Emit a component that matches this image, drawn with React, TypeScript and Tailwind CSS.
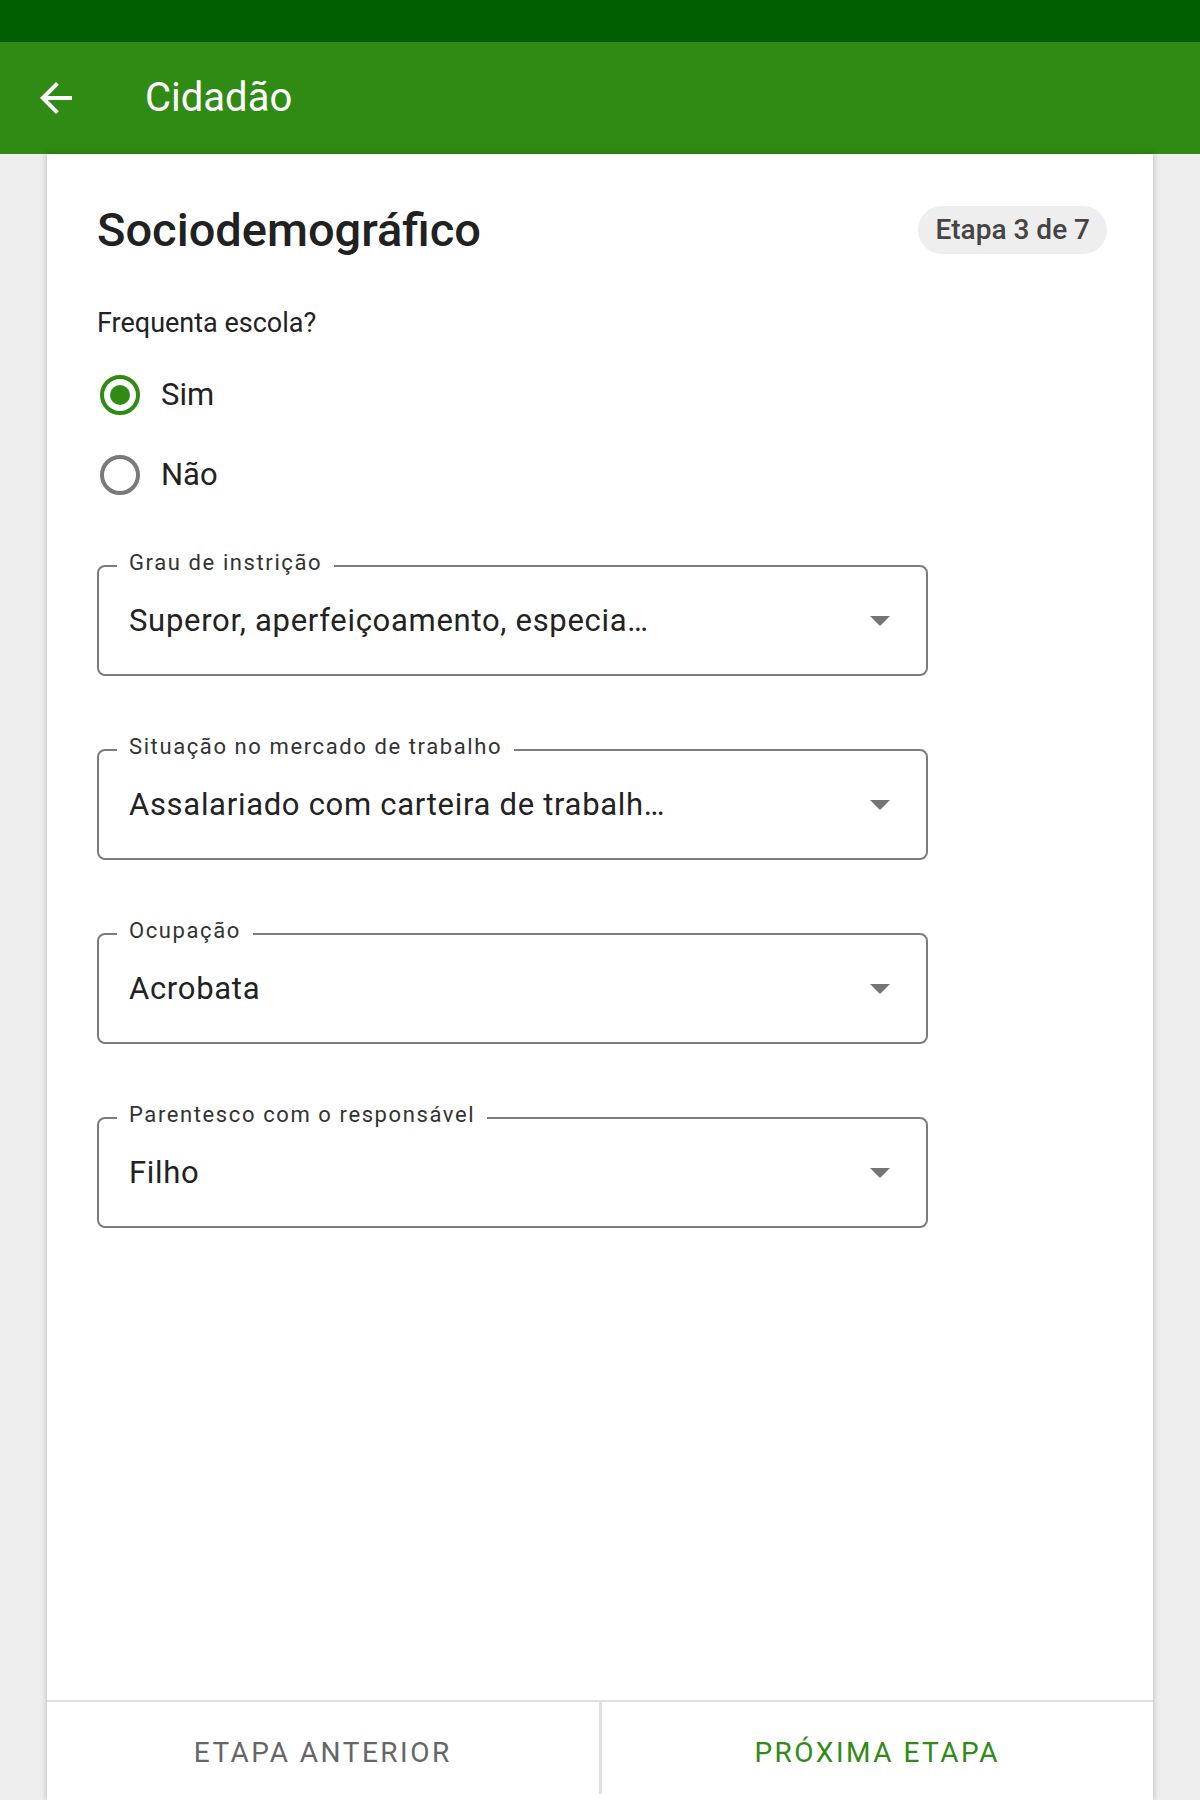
import React from 'react';

const FONT = { fontFamily: 'Roboto, "Noto Sans", sans-serif' };

interface SelectFieldProps {
  label: string;
  value: string;
}

const SelectField: React.FC<SelectFieldProps> = ({ label, value }) => (
  <div className="relative w-[831px] h-[111px] border-2 border-[#7c7c7c] rounded-[8px] flex items-center pl-[30px] pr-[36px]">
    <span className="absolute left-[18px] -top-[15px] bg-white px-3 text-[22px] leading-[22px] tracking-[1.6px] text-[#333333]">
      {label}
    </span>
    <span className="flex-1 text-[31px] leading-[36px] tracking-[0.7px] text-[#222222] whitespace-nowrap">
      {value}
    </span>
    <svg width="20" height="10" viewBox="0 0 20 10" className="shrink-0">
      <path d="M0 0h20L10 10z" fill="#757575" />
    </svg>
  </div>
);

const Radio: React.FC<{ checked?: boolean; label: string }> = ({ checked, label }) => (
  <div className="h-20 flex items-center">
    <div
      className={
        checked
          ? 'ml-[3px] w-10 h-10 rounded-full border-4 border-[#2f8b13] flex items-center justify-center'
          : 'ml-[3px] w-10 h-10 rounded-full border-4 border-[#7a7a7a]'
      }
    >
      {checked && <div className="w-5 h-5 rounded-full bg-[#2f8b13]" />}
    </div>
    <span className="ml-[21px] text-[31px] leading-[36px] text-[#222222]">{label}</span>
  </div>
);

export default function App() {
  return (
    <div className="w-[1200px] h-[1800px] bg-[#eeeeee] flex flex-col overflow-hidden" style={FONT}>
      {/* status bar */}
      <div className="h-[42px] bg-[#005e00] shrink-0" />

      {/* app bar */}
      <div className="h-[112px] bg-[#2f8b13] shrink-0 flex items-center">
        <svg width="48" height="48" viewBox="0 0 24 24" className="ml-8" fill="#ffffff">
          <path d="M20 11H7.83l5.59-5.59L12 4l-8 8 8 8 1.41-1.41L7.83 13H20v-2z" />
        </svg>
        <span className="ml-[65px] text-[40px] leading-[48px] text-white">Cidadão</span>
      </div>

      {/* card */}
      <div className="mx-[47px] flex-1 bg-white shadow-[0_0_6px_rgba(0,0,0,0.25)] flex flex-col">
        <div className="flex-1 pl-[50px] pr-[46px] pt-[48px]">
          <div className="flex items-center justify-between">
            <h1 className="text-[47px] leading-[56px] font-medium text-[#212121]">Sociodemográfico</h1>
            <span className="h-12 px-[17px] rounded-full bg-[#eeeeee] flex items-center text-[28px] font-medium text-[#444444]">
              Etapa 3 de 7
            </span>
          </div>

          <p className="mt-[49px] text-[27px] leading-[32px] text-[#222222]">Frequenta escola?</p>

          <div className="mt-[16px]">
            <Radio checked label="Sim" />
            <Radio label="Não" />
          </div>

          <div className="mt-[50px] flex flex-col gap-[73px]">
            <SelectField label="Grau de instrição" value="Superor, aperfeiçoamento, especia…" />
            <SelectField label="Situação no mercado de trabalho" value="Assalariado com carteira de trabalh…" />
            <SelectField label="Ocupação" value="Acrobata" />
            <SelectField label="Parentesco com o responsável" value="Filho" />
          </div>
        </div>

        {/* footer buttons */}
        <div className="h-[100px] shrink-0 border-t-2 border-[#e0e0e0] flex">
          <button className="flex-1 flex items-center justify-center pt-1 text-[28px] tracking-[2.5px] text-[#666666]">
            ETAPA ANTERIOR
          </button>
          <div className="w-[3px] bg-[#e0e0e0] mb-[6px]" />
          <button className="flex-1 flex items-center justify-center pt-1 text-[28px] tracking-[2.5px] text-[#2f8b13]">
            PRÓXIMA ETAPA
          </button>
        </div>
      </div>
    </div>
  );
}
